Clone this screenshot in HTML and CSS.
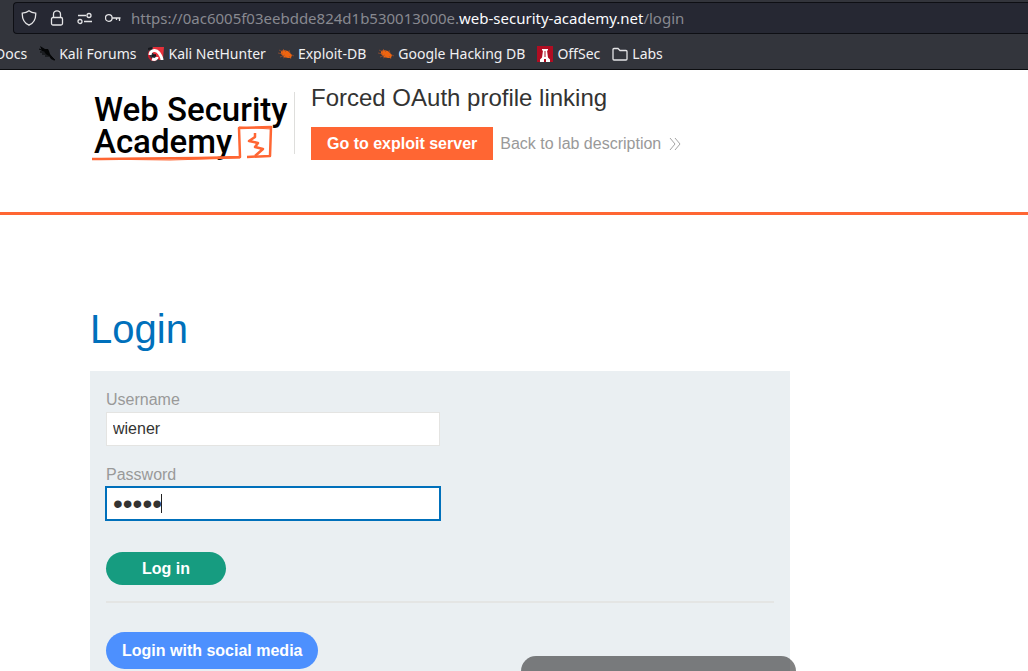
FILE: index.html
```html
<!DOCTYPE html>
<html lang="en">
<head>
<meta charset="utf-8">
<title>Forced OAuth profile linking</title>
<link rel="stylesheet" href="styles.css">
</head>
<body>
<header class="browser">
  <div class="urlbar">
    <svg class="tool-icon" viewBox="0 0 16 16" aria-hidden="true"><path d="M8 .8C6.2 2.2 3.8 2.900 1.300 3.100C1 8.500 3.500 13 8 15.200C12.500 13 15 8.500 14.700 3.100C12.200 2.900 9.800 2.200 8 .8Z"/></svg>
    <svg class="tool-icon" viewBox="0 0 16 16" aria-hidden="true"><rect x="2.500" y="7.500" width="11" height="7.500" rx="1.500"/><path d="M4.500 7.500V4.300a3.500 3.500 0 0 1 7 0V7.500"/></svg>
    <svg class="tool-icon" viewBox="0 0 16 16" aria-hidden="true"><path d="M1 5.500h8M7 11.500h8"/><circle cx="12" cy="5.500" r="2"/><circle cx="3" cy="11.500" r="2"/></svg>
    <svg class="tool-icon" viewBox="0 0 16 16" aria-hidden="true"><circle cx="3.800" cy="8" r="3.300"/><path d="M7.100 8H15.500M14.500 8v3M11.500 8v2"/></svg>
    <span class="url">https://0ac6005f03eebdde824d1b530013000e.<span class="url-host">web-security-academy.net</span>/login</span>
  </div>
  <nav class="bookmarks" aria-label="Bookmarks">
    <a class="bookmark bookmark-docs" href="#">Docs</a>
    <a class="bookmark" href="#"><svg class="mark-icon" viewBox="0 0 16 16" aria-hidden="true"><path fill="#050607" d="M1 0l5 3 3 0 1 2 1 3 3 4 2 3-4-2-2-3-2-1-2-2-1-2-2 0z"/><path stroke="#050607" d="M0 3l5 2M1 6l5 0M3 8l5 0M6 10l4 0M12 10l4 4"/></svg>Kali Forums</a>
    <a class="bookmark" href="#"><svg class="mark-icon" viewBox="0 0 16 16" aria-hidden="true"><path fill="#e5303a" d="M5 1h11l-1 12-4 1L4 6z"/><path fill="none" stroke="#c31c2c" stroke-width="2" d="M2 5c-3 5 0 10 6 9"/><path fill="none" stroke="#fff" stroke-width="3" d="M2 9c0-5 6-6 9-2 2 3 3 5 3 7M4 13c3 1 5 0 5-2"/><path stroke="#17181d" stroke-width="2" d="M4 10l4-1M0 3l4-1"/></svg>Kali NetHunter</a>
    <a class="bookmark" href="#"><svg class="mark-icon" viewBox="0 0 16 16" aria-hidden="true"><path fill="#ef6510" d="M3 5l3-1 4 1 4 4-1 3-3 0-4-1-3-3z"/><path stroke="#a5522c" stroke-width=".7" d="M1 4l4 2M0 7l5 1M2 11l5-2M5 3l3 3M11 4l1 3M11 10l2 3M14 9l2 1M8 11l-3 1"/></svg>Exploit-DB</a>
    <a class="bookmark" href="#"><svg class="mark-icon" viewBox="0 0 16 16" aria-hidden="true"><path fill="#ef6510" d="M3 5l3-1 4 1 4 4-1 3-3 0-4-1-3-3z"/><path stroke="#a5522c" stroke-width=".7" d="M1 4l4 2M0 7l5 1M2 11l5-2M5 3l3 3M11 4l1 3M11 10l2 3M14 9l2 1M8 11l-3 1"/></svg>Google Hacking DB</a>
    <a class="bookmark" href="#"><svg class="mark-icon" viewBox="0 0 16 16" aria-hidden="true"><path fill="#b00d22" d="M0 0h16v16H0z"/><path fill="#fff" d="M5 3h6v1.500h-1l1 7 2 2V16h-4v-3H7v3H3v-2.500l2-2 1-7H5z"/><path fill="#b00d22" d="M7.500 5h1v6h-1z"/></svg>OffSec</a>
    <a class="bookmark" href="#"><svg class="mark-icon folder" viewBox="0 0 16 16" aria-hidden="true"><path d="M1 13V3.500a1 1 0 0 1 1-1h4l2 2h6a1 1 0 0 1 1 1V13a1 1 0 0 1-1 1H2a1 1 0 0 1-1-1Z"/></svg>Labs</a>
  </nav>
</header>

<section class="lab-header">
  <a class="logo" href="#" aria-label="Web Security Academy">
    <svg class="logo-art" viewBox="0 0 204 80">
      <text class="logo-text" x="4" y="37">Web Security</text>
      <text class="logo-text" x="4" y="69">Academy</text>
      <g class="logo-line"><path d="M2 75C40 74 90 75 150 73L149 44L181 43L180 72L157 73"/><path stroke-width="1" d="M2 75L80 76L150 74M149 43L181 45"/><path d="M165 49L165 53L159 57L168 59L165 63L173 65L165 72"/></g>
    </svg>
  </a>
  <div class="lab-title">
    <h2 class="lab-name">Forced OAuth profile linking</h2>
    <div class="lab-links">
      <a class="exploit" href="#">Go to exploit server</a>
      <a class="back" href="#">Back to lab description<svg class="chevrons" viewBox="0 0 12 14" aria-hidden="true"><path d="M1 1l5 6-5 6M6 1l5 6-5 6"/></svg></a>
    </div>
  </div>
</section>

<main class="content">
  <h1 class="page-title">Login</h1>
  <form class="login-form">
    <label class="label" for="username">Username</label>
    <input class="field" id="username" type="text" value="wiener">
    <label class="label" for="password">Password</label>
    <div class="secret">
      <input class="field field-active" id="password" type="password" value="peter">
      <span class="caret"></span>
    </div>
    <button class="pill login" type="submit">Log in</button>
    <hr class="rule">
    <button class="pill social" type="button">Login with social media</button>
  </form>
</main>
<div class="toast"></div>
</body>
</html>
```
FILE: styles.css
```css
* { box-sizing: border-box; }
body {
  margin: 0;
  height: 100vh;
  overflow: hidden;
  position: relative;
  background: #fff;
  color: #333332;
  font: 16px/20px "Liberation Sans", Arial, sans-serif;
}
a { text-decoration: none; }

.browser {
  padding-top: 2px;
  background: #33353c;
  border-bottom: 1px solid #0c0d10;
  font-family: "Noto Sans", sans-serif;
}
.urlbar {
  display: flex;
  align-items: center;
  gap: 12px;
  height: 32px;
  margin-left: 13px;
  padding-left: 7px;
  background: #262833;
  border: 1px solid #0e0f14;
  border-right: 0;
  border-radius: 4px 0 0 4px;
}
.tool-icon {
  width: 16px;
  height: 16px;
  flex: none;
  fill: none;
  stroke: #e4e4e6;
  stroke-width: 1.3;
}
.url { margin-left: -2px; font-size: 15px; color: #888990; white-space: nowrap; }
.url-host { color: #fbfbfe; }
.bookmarks {
  display: flex;
  align-items: center;
  gap: 12px;
  height: 35px;
  padding-top: 4px;
  font-size: 14px;
  white-space: nowrap;
}
.bookmark { display: flex; align-items: center; gap: 4px; color: #f0f0f2; }
.bookmark-docs { margin-left: -5px; }
.mark-icon { width: 16px; height: 16px; flex: none; fill: none; }
.folder { stroke: #e4e4e6; stroke-width: 1.3; }

.lab-header {
  display: flex;
  height: 145px;
  padding: 14px 90px 0;
  border-bottom: 3px solid #ff6633;
}
.logo { height: 80px; flex: none; }
.logo-art { display: block; width: 204px; height: 80px; overflow: visible; }
.logo-text { font: 500 33px Roboto, sans-serif; fill: #000; }
.logo-line { fill: none; stroke: #ff6633; stroke-width: 2.5; stroke-linejoin: round; }
.lab-title {
  align-self: flex-start;
  margin-top: 8px;
  height: 62px;
  padding-left: 16px;
  border-left: 1px solid #dededc;
}
.lab-name { margin: -8px 0 15px; font-size: 24px; line-height: 28px; font-weight: 400; }
.lab-links { display: flex; align-items: center; gap: 7px; white-space: nowrap; }
.exploit { padding: 7px 16px 6px; background: #ff6633; color: #fff; font-weight: 700; }
.back { display: flex; align-items: center; gap: 8px; color: #999; }
.chevrons { width: 12px; height: 14px; fill: none; stroke: #a5a5a5; }

.content { padding: 90px 90px 0; }
.page-title { margin: 0 0 18px; color: #0070bb; font-size: 40px; line-height: 48px; font-weight: 400; }
.login-form {
  display: flex;
  flex-direction: column;
  align-items: flex-start;
  max-width: 700px;
  padding: 19px 16px 32px;
  background: #eaeff2;
}
.label { margin-bottom: 2px; color: #999; }
.field {
  display: block;
  width: 334px;
  height: 34px;
  padding: 0 6px;
  border: 1px solid #e4e4e2;
  background: #fff;
  color: #333332;
  font: inherit;
}
#username { margin-bottom: 19px; }
.secret { position: relative; margin-bottom: 32px; }
.field-active { height: 33px; border-color: #0070bb; outline: 1px solid #0070bb; font-size: 28px; }
.caret { position: absolute; left: 55px; top: 7px; width: 1px; height: 19px; background: #222; }
.pill { border: 0; color: #fff; font: inherit; font-weight: 700; }
.login { width: 120px; height: 33px; border-radius: 17px; background: #169c80; }
.rule { width: 100%; margin: 16px 0 29px; border: 0; border-top: 2px solid #e4e5e4; }
.social { height: 37px; padding: 0 16px; border-radius: 19px; background: #4d90fe; }
.toast {
  position: absolute;
  bottom: 0;
  left: 521px;
  width: 275px;
  height: 15px;
  border-radius: 15px 15px 0 0;
  background: rgba(9, 9, 9, .51);
}
```
